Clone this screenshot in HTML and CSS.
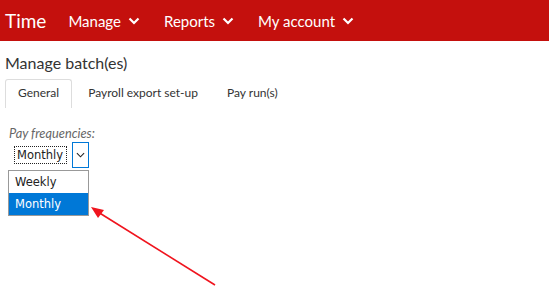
FILE: index.html
```html
<!DOCTYPE html>
<html lang="en">
<head>
  <meta charset="UTF-8">
  <title>Manage batch(es)</title>
  <link rel="stylesheet" href="styles.css">
</head>
<body>
  <div class="topbar">
    <span class="brand">Time</span>
    <span class="menu">Manage <svg class="chev" viewBox="0 0 12 8"><path d="M1.5 1.5 L6 6 L10.5 1.5" /></svg></span>
    <span class="menu">Reports <svg class="chev" viewBox="0 0 12 8"><path d="M1.5 1.5 L6 6 L10.5 1.5" /></svg></span>
    <span class="menu">My account <svg class="chev" viewBox="0 0 12 8"><path d="M1.5 1.5 L6 6 L10.5 1.5" /></svg></span>
  </div>

  <div class="content">
    <h1>Manage batch(es)</h1>
    <div class="tabs">
      <div class="tab active">General</div>
      <div class="tab">Payroll export set-up</div>
      <div class="tab">Pay run(s)</div>
    </div>

    <div class="field">
      <div class="label">Pay frequencies:</div>
      <div class="select">
        <span class="value">Monthly</span>
        <span class="btn"><svg viewBox="0 0 10 6"><path d="M1 1 L5 5 L9 1" /></svg></span>
      </div>
      <div class="options">
        <div class="opt">Weekly</div>
        <div class="opt selected">Monthly</div>
      </div>
    </div>
  </div>

  <!-- annotation arrow -->
  <svg class="arrow" width="549" height="294" viewBox="0 0 549 294">
    <line x1="215" y1="285" x2="98" y2="212" stroke="#f0141e" stroke-width="1.6" />
    <polygon points="91,207 104,210 98,218" fill="#f0141e" />
  </svg>
</body>
</html>
```

FILE: styles.css
```css
* {
  box-sizing: border-box;
}

body {
  margin: 0;
  font-family: Lato, 'Liberation Sans', sans-serif;
  background: #fff;
  color: #333;
  position: relative;
  width: 549px;
  height: 294px;
  overflow: hidden;
}

.topbar {
  background: #c4100d;
  height: 41px;
  display: flex;
  align-items: center;
  padding-left: 5px;
  color: #fff;
}

.brand {
  font-size: 19px;
  margin-right: 22px;
}

.menu {
  font-size: 15px;
  margin-right: 24px;
  display: flex;
  align-items: center;
}

.chev {
  width: 12px;
  height: 8px;
  margin-left: 7px;
  fill: none;
  stroke: #fff;
  stroke-width: 2.2;
}

.content {
  padding: 0 5px;
}

h1 {
  font-size: 16px;
  font-weight: normal;
  margin: 12px 0 7px;
  color: #333;
}

.tabs {
  display: flex;
  gap: 3px;
  font-size: 12px;
}

.tab {
  padding: 5px 12px 8px;
  border: 1px solid transparent;
  border-bottom: none;
  color: #333;
}

.tab.active {
  border-color: #ddd;
  border-radius: 3px 3px 0 0;
}

.field {
  padding-left: 4px;
  margin-top: 17px;
}

.label {
  font-size: 12.8px;
  font-style: italic;
  color: #666;
}

.select {
  display: flex;
  align-items: center;
  margin-top: 1px;
  height: 26px;
}

.value {
  font-family: 'DejaVu Sans', sans-serif;
  font-size: 11.5px;
  color: #222;
  border: 1px dotted #222;
  padding: 1px 2px;
  margin-left: 5px;
  width: 53px;
}

.btn {
  width: 17px;
  height: 26px;
  border: 1px solid #0078d7;
  margin-left: 5px;
  display: flex;
  align-items: center;
  justify-content: center;
}

.btn svg {
  width: 9px;
  height: 6px;
  fill: none;
  stroke: #222;
  stroke-width: 1.2;
}

.options {
  width: 81px;
  border: 1px solid #999;
  margin-top: 2px;
  margin-left: -1px;
  font-family: 'DejaVu Sans', sans-serif;
  font-size: 11.5px;
}

.opt {
  height: 22px;
  line-height: 22px;
  padding-left: 6px;
  color: #222;
}

.opt.selected {
  background: #0078d7;
  color: #fff;
}

.arrow {
  position: absolute;
  left: 0;
  top: 0;
  pointer-events: none;
}
```
